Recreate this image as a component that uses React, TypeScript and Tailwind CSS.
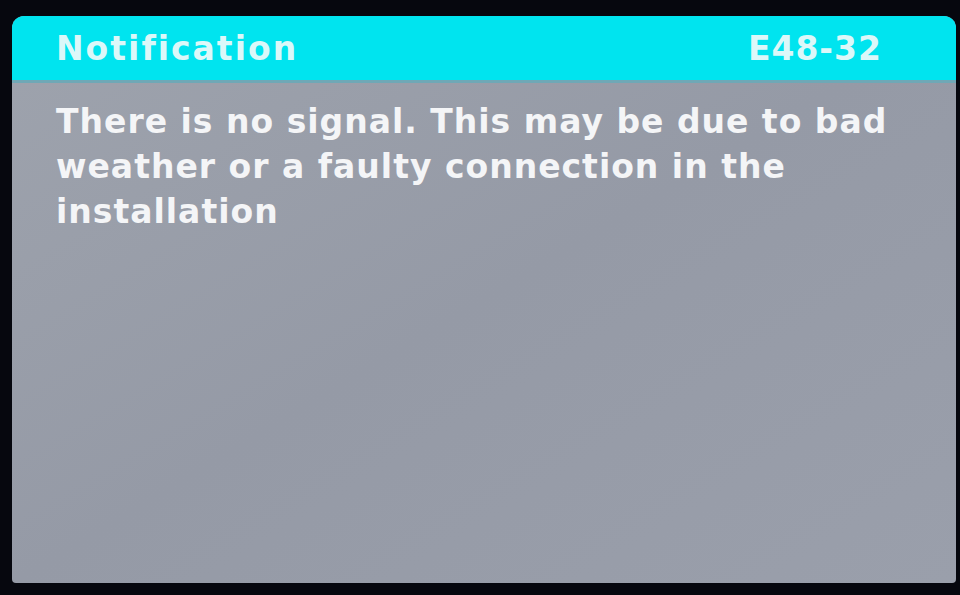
export default function App() {
  return (
    <div className="h-[595px] w-[960px] overflow-hidden bg-[#06070e] pl-[12px] pr-[4px] pt-[16px]">
      <div
        className="flex h-[567px] w-[944px] flex-col overflow-hidden rounded-t-[12px] rounded-b-[4px] bg-gradient-to-br from-[#9ea3ad] via-[#959aa6] to-[#9a9fab]"
        style={{ fontFamily: '"DejaVu Sans", sans-serif' }}
      >
        <div className="flex h-[64px] items-center justify-between bg-[#00e4ef] pl-[44px] pr-[74px] pt-[2px]">
          <span className="text-[33px] font-bold tracking-[2px] text-[#dcf8f9]">Notification</span>
          <span className="text-[33px] font-bold tracking-[1px] text-[#dcf8f9]">E48-32</span>
        </div>
        <div className="h-[3px] bg-[#6fa8b6]" />
        <p className="pl-[44px] pr-[30px] pt-[16px] text-[33px] font-bold leading-[45px] tracking-[1px] text-[#f4f5f7]">
          There is no signal. This may be due to bad weather or a faulty connection in the installation
        </p>
      </div>
    </div>
  );
}
